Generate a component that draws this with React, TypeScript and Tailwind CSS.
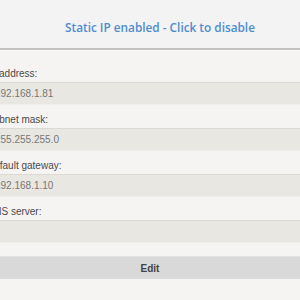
import React from "react";

const fields = [
  { label: "IP address:", value: "192.168.1.81" },
  { label: "Subnet mask:", value: "255.255.255.0" },
  { label: "Default gateway:", value: "192.168.1.10" },
  { label: "DNS server:", value: "" },
];

export default function App() {
  return (
    <div className="w-[300px] h-[300px] overflow-hidden bg-[#f6f3f3] font-['Liberation_Sans',sans-serif]">
      <div className="h-[48px] bg-[#f4f3f3] flex items-center pl-[65px] pt-[7px]">
        <span className="text-[11.8px] font-semibold text-[#4d8dcf] font-['Open_Sans',sans-serif] whitespace-nowrap">
          Static IP enabled - Click to disable
        </span>
      </div>
      <div className="h-[2px] bg-[#c4c0c0]" />
      <div className="h-[1px] bg-[#fbfafa]" />
      <div className="flex flex-col pt-[15px] -ml-[13px] w-[330px]">
        {fields.map((f) => (
          <div key={f.label} className="flex flex-col">
            <div className="h-[16px] text-[10px] leading-[16px] text-[#4a4a4a] whitespace-nowrap">{f.label}</div>
            <div className="h-[23px] bg-[#e9e7e1] border-t border-[#dcd9d3] border-b border-b-[#f0eeea] pl-[8px] text-[10px] leading-[21px] text-[#777] whitespace-nowrap">
              {f.value}
            </div>
            <div className="h-[7px]" />
          </div>
        ))}
      </div>
      <div className="mt-[6px] h-[23px] bg-[#d9d9d9] border-t border-[#e2e2e2] flex items-center justify-center">
        <span className="text-[10px] font-bold text-[#444]">Edit</span>
      </div>
    </div>
  );
}
